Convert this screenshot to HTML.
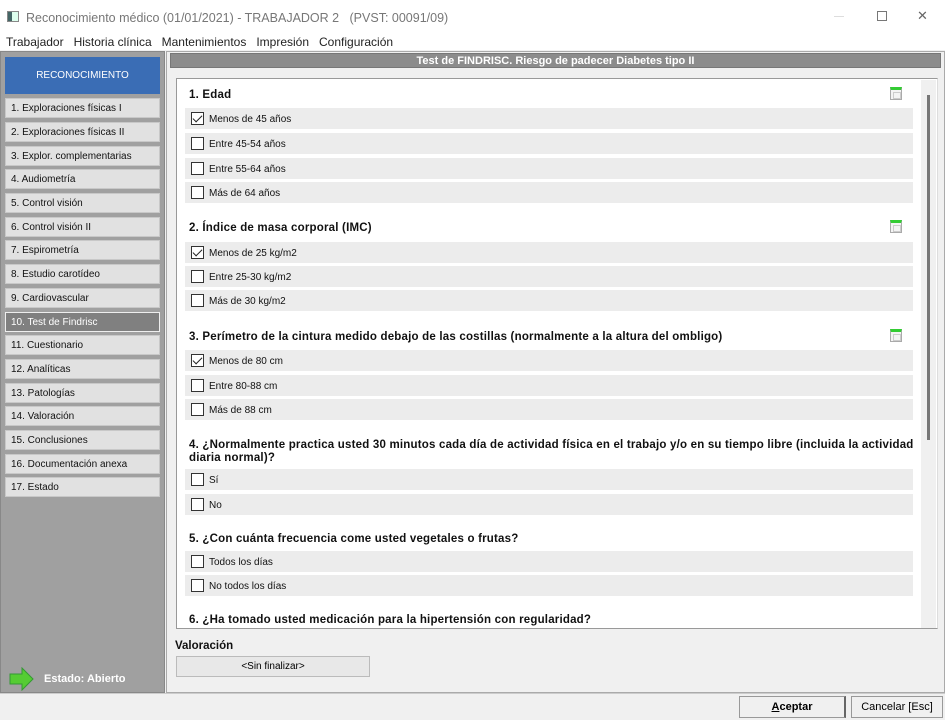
<!DOCTYPE html><html><head><meta charset="utf-8"><style>
*{margin:0;padding:0;box-sizing:border-box}
body{width:945px;height:720px;background:#f0f0f0;font-family:"Liberation Sans",sans-serif;position:relative;overflow:hidden;font-size:12px}
.a{position:absolute}
.si{position:absolute;left:5px;width:155px;height:20px;background:#e1e1e1;border:1px solid #c8c8c8;font-size:10px;line-height:20px;padding-left:5px;color:#111}
.row{position:absolute;left:185px;width:728px;height:21px;background:#ececec;font-size:10px;line-height:23px;padding-left:24px;color:#111}
.cb{position:absolute;left:6px;top:4px;width:13px;height:13px;border:1px solid #333;background:#fff}
.cb.c::after{content:"";position:absolute;left:3px;top:0px;width:4px;height:8px;border:solid #222;border-width:0 1.5px 1.5px 0;transform:rotate(45deg)}
.h{position:absolute;left:189px;font-weight:bold;font-size:11.5px;color:#111;letter-spacing:.2px;margin-top:2px}
.cal{position:absolute;left:890px;width:12px;height:13px;border:1px solid #aaa;border-top:3px solid #3c3;background:#f4f4f4}
.cal::after{content:"";position:absolute;left:2px;top:2px;width:6px;height:5px;border:1px solid #ccc}
</style></head><body>
<div class="a" style="left:0;top:0;width:945px;height:33px;background:#fff"></div>
<div class="a" style="left:7px;top:11px;width:12px;height:11px;border:1px solid #888;background:#dfe"><div style="width:4px;height:9px;background:#466"></div></div>
<div class="a" style="left:26px;top:11px;color:#777;font-size:12.5px">Reconocimiento médico (01/01/2021) - TRABAJADOR 2 &nbsp;&nbsp;(PVST: 00091/09)</div>
<div class="a" style="left:834px;top:16px;width:10px;height:1px;background:#ddd"></div>
<div class="a" style="left:877px;top:11px;width:10px;height:10px;border:1px solid #777"></div>
<div class="a" style="left:917px;top:8px;font-size:13px;color:#666">✕</div>
<div class="a" style="left:0;top:33px;width:945px;height:17px;background:#fff"></div>
<div class="a" style="left:6px;top:35px;font-size:12px;color:#222">Trabajador&nbsp;&nbsp; Historia clínica&nbsp;&nbsp; Mantenimientos&nbsp;&nbsp; Impresión&nbsp;&nbsp; Configuración</div>
<div class="a" style="left:0;top:51px;width:165px;height:642px;background:#a0a0a0;border:1px solid #888"></div>
<div class="a" style="left:5px;top:57px;width:155px;height:37px;background:#3a6db5;color:#fff;font-size:10px;text-align:center;line-height:37px">RECONOCIMIENTO</div>
<div class="si" style="top:98px">1. Exploraciones físicas I</div>
<div class="si" style="top:122px">2. Exploraciones físicas II</div>
<div class="si" style="top:146px">3. Explor. complementarias</div>
<div class="si" style="top:169px">4. Audiometría</div>
<div class="si" style="top:193px">5. Control visión</div>
<div class="si" style="top:217px">6. Control visión II</div>
<div class="si" style="top:240px">7. Espirometría</div>
<div class="si" style="top:264px">8. Estudio carotídeo</div>
<div class="si" style="top:288px">9. Cardiovascular</div>
<div class="si" style="top:312px;background:#808080;color:#fff;border-color:#eee">10. Test de Findrisc</div>
<div class="si" style="top:335px">11. Cuestionario</div>
<div class="si" style="top:359px">12. Analíticas</div>
<div class="si" style="top:383px">13. Patologías</div>
<div class="si" style="top:406px">14. Valoración</div>
<div class="si" style="top:430px">15. Conclusiones</div>
<div class="si" style="top:454px">16. Documentación anexa</div>
<div class="si" style="top:477px">17. Estado</div>
<svg class="a" style="left:9px;top:667px" width="26" height="24"><path d="M1 7h12V1l11 11-11 11v-6H1z" fill="#5c3" stroke="#393" stroke-width="1"/></svg>
<div class="a" style="left:44px;top:673px;color:#fff;font-weight:bold;font-size:11px">Estado: Abierto</div>
<div class="a" style="left:166px;top:51px;width:779px;height:642px;border:1px solid #aaa;background:#f0f0f0"></div>
<div class="a" style="left:170px;top:53px;width:771px;height:15px;background:#8c8c8c;color:#fff;font-weight:bold;font-size:11px;text-align:center;line-height:15px;border:1px solid #777">Test de FINDRISC. Riesgo de padecer Diabetes tipo II</div>
<div class="a" style="left:176px;top:78px;width:762px;height:551px;background:#fff;border:1px solid #999;border-right-color:#ddd"></div>
<div class="a" style="left:921px;top:80px;width:15px;height:548px;background:#f0f0f0"></div>
<div class="a" style="left:927px;top:95px;width:3px;height:345px;background:#777"></div>
<div class="h" style="top:87px">1. Edad</div><div class="cal" style="top:87px"></div>
<div class="row" style="top:108px"><span class="cb c"></span>Menos de 45 años</div>
<div class="row" style="top:133px"><span class="cb"></span>Entre 45-54 años</div>
<div class="row" style="top:158px"><span class="cb"></span>Entre 55-64 años</div>
<div class="row" style="top:182px"><span class="cb"></span>Más de 64 años</div>
<div class="h" style="top:220px">2. Índice de masa corporal (IMC)</div><div class="cal" style="top:220px"></div>
<div class="row" style="top:242px"><span class="cb c"></span>Menos de 25 kg/m2</div>
<div class="row" style="top:266px"><span class="cb"></span>Entre 25-30 kg/m2</div>
<div class="row" style="top:290px"><span class="cb"></span>Más de 30 kg/m2</div>
<div class="h" style="top:329px">3. Perímetro de la cintura medido debajo de las costillas (normalmente a la altura del ombligo)</div><div class="cal" style="top:329px"></div>
<div class="row" style="top:350px"><span class="cb c"></span>Menos de 80 cm</div>
<div class="row" style="top:375px"><span class="cb"></span>Entre 80-88 cm</div>
<div class="row" style="top:399px"><span class="cb"></span>Más de 88 cm</div>
<div class="h" style="top:437px;line-height:13px;width:725px">4. ¿Normalmente practica usted 30 minutos cada día de actividad física en el trabajo y/o en su tiempo libre (incluida la actividad diaria normal)?</div>
<div class="row" style="top:469px"><span class="cb"></span>Sí</div>
<div class="row" style="top:494px"><span class="cb"></span>No</div>
<div class="h" style="top:531px">5. ¿Con cuánta frecuencia come usted vegetales o frutas?</div>
<div class="row" style="top:551px"><span class="cb"></span>Todos los días</div>
<div class="row" style="top:575px"><span class="cb"></span>No todos los días</div>
<div class="h" style="top:612px">6. ¿Ha tomado usted medicación para la hipertensión con regularidad?</div>
<div class="a" style="left:175px;top:640px;font-weight:bold;font-size:11.5px;color:#111">Valoración</div>
<div class="a" style="left:176px;top:656px;width:194px;height:21px;border:1px solid #bbb;background:#e8e8e8;font-size:10px;text-align:center;line-height:19px">&lt;Sin finalizar&gt;</div>
<div class="a" style="left:0;top:693px;width:945px;height:1px;background:#ccc"></div>
<div class="a" style="left:739px;top:696px;width:107px;height:22px;border:1px solid #999;border-right:2px solid #666;background:#f0f0f0;font-weight:bold;font-size:11px;text-align:center;line-height:20px"><u>A</u>ceptar</div>
<div class="a" style="left:851px;top:696px;width:92px;height:22px;border:1px solid #999;background:#f0f0f0;font-size:11px;text-align:center;line-height:20px">Cancelar [Esc]</div>
</body></html>
